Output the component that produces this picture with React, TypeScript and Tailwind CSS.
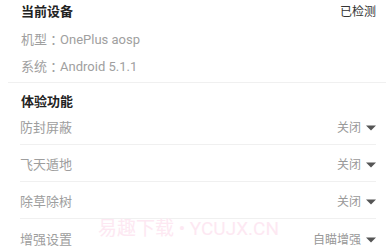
const FONT = {
  fontFamily: 'Roboto, "Noto Sans CJK SC", "Noto Sans", sans-serif',
};

// full-width colon, centred in its cell as on the device
const COLON = { fontFamily: '"Noto Sans CJK TC", sans-serif' };

type Feature = { label: string; value: string };

const FEATURES: Feature[] = [
  { label: "防封屏蔽", value: "关闭" },
  { label: "飞天遁地", value: "关闭" },
  { label: "除草除树", value: "关闭" },
  { label: "增强设置", value: "自瞄增强" },
];

function Caret() {
  return (
    <svg width="10" height="6" viewBox="0 0 10 6" className="ml-[5px] shrink-0">
      <path d="M0 0.5 L10 0.5 L5 5.5 Z" fill="#555555" />
    </svg>
  );
}

function FeatureRow({ item, index }: { item: Feature; index: number }) {
  const first = index === 0;
  const last = index === FEATURES.length - 1;
  return (
    <div
      className={
        first
          ? "flex h-[24px] items-start justify-between border-b border-[#f0f0f0]"
          : last
          ? "flex h-[37px] items-center justify-between pt-[4px]"
          : "flex h-[37px] items-center justify-between border-b border-[#f0f0f0] pt-[4px]"
      }
    >
      <span className="text-[13px] leading-[14px] text-[#9e9e9e]">{item.label}</span>
      <span className="flex items-center text-[12px] leading-[14px] text-[#999999]">
        {item.value}
        <Caret />
      </span>
    </div>
  );
}

export default function App() {
  return (
    <div className="relative h-[251px] w-[386px] overflow-hidden bg-white" style={FONT}>
      {/* 当前设备 */}
      <div className="ml-[8px] border-b border-[#f0f0f0] pb-[4px] pl-[13px] pr-[10px]">
        <div className="flex h-[24px] items-center justify-between">
          <span className="text-[13px] font-bold text-[#222222]">当前设备</span>
          <span className="text-[12px] text-[#333333]">已检测</span>
        </div>
        <div className="flex h-[32px] items-center text-[13px] text-[#a0a0a0]">
          机型<span style={COLON}>：</span>OnePlus aosp
        </div>
        <div className="flex h-[22px] items-center text-[13px] text-[#a0a0a0]">
          系统<span style={COLON}>：</span>Android 5.1.1
        </div>
      </div>

      {/* 体验功能 */}
      <div className="pl-[21px] pr-[10px]">
        <div className="flex h-[38px] items-center text-[13px] font-bold text-[#222222]">
          体验功能
        </div>
      </div>
      <div className="ml-[20px] mr-[10px]">
        {FEATURES.map((f, i) => (
          <FeatureRow key={f.label} item={f} index={i} />
        ))}
      </div>

      {/* watermark */}
      <div className="pointer-events-none absolute left-[98px] top-[217px] whitespace-nowrap text-[19px] leading-[24px] text-[#fde8f2]">
        易趣下载 • YCUJX.CN
      </div>
    </div>
  );
}
